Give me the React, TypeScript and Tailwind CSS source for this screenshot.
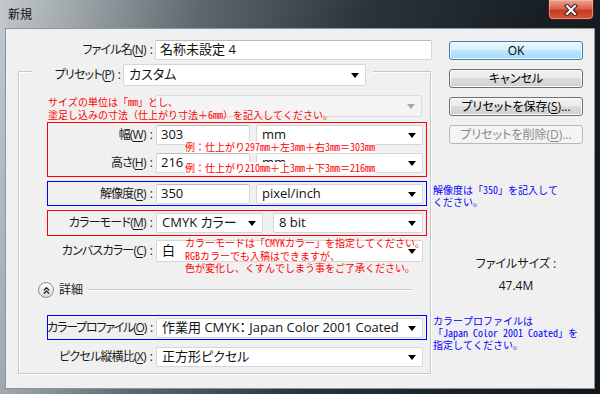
import type { ReactNode } from "react";
import { ChevronsUp } from "lucide-react";

const UI = "font-['Open_Sans','Noto_Sans_CJK_JP',sans-serif] [font-feature-settings:'palt']";
const MEMO =
  "font-['Noto_Sans_Mono_CJK_JP','Noto_Sans_CJK_JP',monospace] [font-feature-settings:normal] text-[10px] whitespace-nowrap";

function Key({ k }: { k: string }) {
  return (
    <>
      (<span className="underline underline-offset-[2px]">{k}</span>)
      <span className="ml-[4px]">:</span>
    </>
  );
}

function Label({ text, k, className = "w-[104px]" }: { text: string; k: string; className?: string }) {
  return (
    <div
      className={`flex shrink-0 justify-end text-[12px] tracking-[-0.8px] text-[#1a1a1a] whitespace-nowrap ${className}`}
    >
      <span>
        {text}
        <Key k={k} />
      </span>
    </div>
  );
}

function Arrow({ disabled }: { disabled?: boolean }) {
  return (
    <svg width="8" height="5" viewBox="0 0 8 5" className="shrink-0">
      <path d="M0 0h8L4 5z" fill={disabled ? "#a8a8a8" : "#000"} />
    </svg>
  );
}

function Field({ value, className = "" }: { value: string; className?: string }) {
  return (
    <div
      className={`flex h-[20px] items-center rounded-[2px] border border-[#d3d6da] border-t-[#b9bcc1] bg-white pl-[4px] text-[13px] text-[#111] ${className}`}
    >
      {value}
    </div>
  );
}

function Select({
  value,
  className = "",
  disabled,
  h = "h-[20px]",
}: {
  value?: ReactNode;
  className?: string;
  disabled?: boolean;
  h?: string;
}) {
  return (
    <div
      className={`flex ${h} items-center justify-between rounded-[2px] border pl-[5px] pr-[6px] text-[13px] text-[#111] ${
        disabled ? "border-[#dcdcdc] bg-[#f4f4f4]" : "border-[#d3d6da] bg-white"
      } ${className}`}
    >
      <span className="whitespace-nowrap">{value}</span>
      <Arrow disabled={disabled} />
    </div>
  );
}

function Button({ children, kind }: { children: ReactNode; kind?: "primary" | "disabled" }) {
  const look =
    kind === "primary"
      ? "border-[#3c7fb1] bg-[linear-gradient(#eaf6fd_0%,#d9f0fc_45%,#bee6fd_50%,#a7d9f5_100%)] shadow-[inset_0_0_0_1px_#effaff] text-black"
      : kind === "disabled"
      ? "border-[#b5b9bc] bg-[#f4f4f4] text-[#8a8a8a]"
      : "border-[#707070] bg-[linear-gradient(#f2f2f2_0%,#ebebeb_45%,#dddddd_50%,#cfcfcf_100%)] shadow-[inset_0_0_0_1px_#fbfbfb] text-black";
  return (
    <div className={`flex h-[19px] items-center justify-center rounded-[3px] border text-[12px] ${look}`}>
      {children}
    </div>
  );
}

function CloseButton() {
  return (
    <div className="mr-[6px] flex h-[20px] w-[46px] items-center justify-center rounded-b-[5px] border border-t-0 border-[#4a1a12] bg-[linear-gradient(#eba594_0%,#dc644c_45%,#c63a22_55%,#d4583c_100%)] shadow-[inset_0_0_0_1px_rgba(255,200,190,0.5)]">
      <svg width="14" height="12" viewBox="0 0 14 12">
        <path d="M3 2l8 8M11 2l-8 8" stroke="#3a1a14" strokeWidth="4.2" strokeLinecap="square" />
        <path d="M3 2l8 8M11 2l-8 8" stroke="#fff" strokeWidth="2.2" strokeLinecap="square" />
      </svg>
    </div>
  );
}

export default function App() {
  return (
    <div
      className={`relative h-[394px] w-[600px] overflow-hidden bg-[linear-gradient(100deg,#c3c9cc_0%,#a3abaf_10%,#5d676d_30%,#2a343a_55%,#182026_80%,#10171c_100%)] ${UI}`}
    >
      {/* title bar */}
      <div className="flex h-[28px] items-start justify-between">
        <span className="ml-[8px] mt-[6px] text-[12px] text-[#111]">新規</span>
        <CloseButton />
      </div>

      {/* client area */}
      <div className="ml-[5px] flex h-[361px] w-[590px] border border-[#8b959b] bg-[#f0f0f0]">
        {/* form */}
        <div className="w-[427px] shrink-0">
          <div className="mt-[11px] flex h-[20px] items-center">
            <Label text="ファイル名" k="N" className="w-[146px]" />
            <Field value="名称未設定 4" className="ml-[3px] w-[277px]" />
          </div>

          {/* preset group */}
          <div className="ml-[12px] mt-[11px] w-[413px] border border-[#c4c8cb] pb-[6px] shadow-[inset_1px_1px_0_#fff,1px_1px_0_#fff]">
            <div className="ml-[13px] -mt-[8px] flex h-[22px] w-fit items-center bg-[#f0f0f0] pr-[7px]">
              <Label text="プリセット" k="P" className="w-[88px]" />
              <Select value="カスタム" className="ml-[3px] w-[243px]" h="h-[22px]" />
            </div>

            <Select disabled className="ml-[136px] mt-[9px] w-[267px]" h="h-[22px]" />

            <div className="ml-[28px] mt-[5px] w-[380px] border border-[#ff0000] pb-[3px] pt-[2px]">
              <div className="flex h-[20px] items-center">
                <Label text="幅" k="W" />
                <Field value="303" className="ml-[4px] w-[94px]" />
                <Select value="mm" className="ml-[6px] w-[167px]" />
              </div>
              <div className="mt-[8px] flex h-[20px] items-center">
                <Label text="高さ" k="H" />
                <Field value="216" className="ml-[4px] w-[94px] border-[#5b9bd5]" />
                <Select value="mm" className="ml-[6px] w-[167px]" />
              </div>
            </div>

            <div className="ml-[28px] mt-[4px] w-[380px] border border-[#0000ff] pb-[1px] pt-[2px]">
              <div className="flex h-[20px] items-center">
                <Label text="解像度" k="R" />
                <Field value="350" className="ml-[4px] w-[94px]" />
                <Select value="pixel/inch" className="ml-[6px] w-[167px]" />
              </div>
            </div>

            <div className="ml-[28px] mt-[4px] w-[380px] border border-[#ff0000] pb-[2px] pt-[2px]">
              <div className="flex h-[20px] items-center">
                <Label text="カラーモード" k="M" />
                <Select value="CMYK カラー" className="ml-[4px] w-[107px]" />
                <Select value="8 bit" className="ml-[10px] w-[150px]" />
              </div>
            </div>

            <div className="ml-[29px] mt-[4px] flex h-[22px] items-center">
              <Label text="カンバスカラー" k="C" />
              <Select value="白" className="ml-[4px] w-[267px]" h="h-[22px]" />
            </div>

            <div className="ml-[19px] mt-[20px] flex h-[16px] items-center">
              <div className="flex h-[16px] w-[16px] items-center justify-center rounded-full border border-[#8e8f8f] bg-[linear-gradient(#ffffff,#d9d9d9)]">
                <ChevronsUp size={11} strokeWidth={2.6} color="#222" />
              </div>
              <span className="ml-[5px] text-[12px] text-[#1a1a1a]">詳細</span>
              <div className="ml-[5px] h-[2px] w-[325px] border-t border-[#c9cbcd] bg-white" />
            </div>

            <div className="ml-[28px] mt-[17px] w-[380px] border border-[#0000ff] pb-[1px] pt-[2px]">
              <div className="flex h-[20px] items-center">
                <Label text="カラープロファイル" k="O" className="w-[104px] tracking-[-1.2px]" />
                <Select
                  value="作業用 CMYK： Japan Color 2001 Coated"
                  className="ml-[4px] w-[267px] text-[12.5px]"
                />
              </div>
            </div>

            <div className="ml-[29px] mt-[7px] flex h-[20px] items-center">
              <Label text="ピクセル縦横比" k="X" />
              <Select value="正方形ピクセル" className="ml-[4px] w-[267px]" />
            </div>
          </div>
        </div>

        {/* buttons */}
        <div className="ml-[16px] mt-[12px] w-[134px]">
          <div className="flex flex-col gap-[9px]">
            <Button kind="primary">OK</Button>
            <Button>キャンセル</Button>
            <Button>
              プリセットを保存(<span className="underline underline-offset-[2px]">S</span>)...
            </Button>
            <Button kind="disabled">
              プリセットを削除(<span className="underline underline-offset-[2px]">D</span>)...
            </Button>
          </div>
          <div className="mt-[113px] text-center text-[12px] leading-[14px] text-[#1a1a1a]">ファイルサイズ :</div>
          <div className="mt-[8px] text-center text-[12px] leading-[14px] text-[#111]">47.4M</div>
        </div>
      </div>

      {/* notes laid over the dialog */}
      <div className={`absolute left-[48px] top-[95px] leading-[13px] text-[#ff0000] ${MEMO}`}>
        <div>サイズの単位は「mm」とし、</div>
        <div>塗足し込みの寸法（仕上がり寸法＋6mm）を記入してください。</div>
      </div>
      <div className={`absolute left-[185px] top-[141px] bg-white leading-[12px] text-[#ff0000] ${MEMO}`}>
        例：仕上がり297mm＋左3mm＋右3mm＝303mm
      </div>
      <div className={`absolute left-[185px] top-[162px] bg-white leading-[12px] text-[#ff0000] ${MEMO}`}>
        例：仕上がり210mm＋上3mm＋下3mm＝216mm
      </div>
      <div className={`absolute left-[185px] top-[237px] leading-[12.5px] text-[#ff0000] ${MEMO}`}>
        <div>カラーモードは「CMYKカラー」を指定してください。</div>
        <div>RGBカラーでも入稿はできますが、</div>
        <div>色が変化し、くすんでしまう事をご了承ください。</div>
      </div>
      <div className={`absolute left-[433px] top-[184px] leading-[12px] text-[#0000ff] ${MEMO}`}>
        <div>解像度は「350」を記入して</div>
        <div>ください。</div>
      </div>
      <div className={`absolute left-[433px] top-[315px] leading-[12px] text-[#0000ff] ${MEMO}`}>
        <div>カラープロファイルは</div>
        <div>「Japan Color 2001 Coated」を</div>
        <div>指定してください。</div>
      </div>
    </div>
  );
}
